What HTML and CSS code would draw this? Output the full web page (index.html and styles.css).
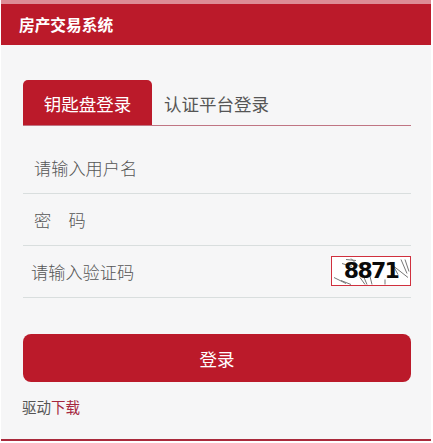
FILE: index.html
```html
<!DOCTYPE html>
<html lang="zh-CN">
<head>
<meta charset="utf-8">
<title>房产交易系统</title>
<link rel="stylesheet" href="styles.css">
</head>
<body>
<div class="panel">
  <header class="head">房产交易系统</header>
  <main class="content">
    <nav class="tabs">
      <a class="tab active">钥匙盘登录</a>
      <a class="tab">认证平台登录</a>
    </nav>
    <form class="form">
      <div class="row"><input class="field user" placeholder="请输入用户名"></div>
      <div class="row"><input class="field user" placeholder="密&#12288;码"></div>
      <div class="row">
        <input class="field code" placeholder="请输入验证码">
        <div class="captcha">
          <svg class="noise" viewBox="0 0 78 27" aria-hidden="true">
            <path d="M2 20l12 6M9 23l10 4M10 6l10 3M14 2l10 1M19 1l8 8M28 20l5 7M32 20l3 7M38 19l2 8M53 22v5M62 9l14 11M60 6l6 11M69 2l6 14M73 2l4 12"/>
          </svg>
          <span class="digits">8871</span>
        </div>
      </div>
      <button class="submit" type="button">登录</button>
    </form>
    <p class="driver">驱动<a class="link">下载</a></p>
  </main>
</div>
</body>
</html>
```
FILE: styles.css
```css
* { box-sizing: border-box; }
html, body { margin: 0; height: 100%; background: #fff; }
body { font-family: "Noto Sans CJK SC", "Liberation Sans", sans-serif; color: #555; }
.panel {
  margin: 0 2px 0 1px;
  height: 441px;
  background: #f6f6f7;
  border-top: 4px solid #dd8c95;
  border-bottom: 2px solid #a92a3c;
  display: flex;
  flex-direction: column;
}
.head {
  height: 41px;
  flex: none;
  padding-left: 18px;
  background: #bb1a2a;
  color: #fff;
  font-size: 15.7px;
  font-weight: 700;
  line-height: 41px;
}
.content { flex: 1; padding: 35px 20px 0 22px; }
.tabs {
  display: flex;
  height: 46px;
  border-bottom: 1px solid #c07583;
}
.tab {
  display: block;
  font-size: 17.5px;
  line-height: 47px;
  padding-left: 12px;
  color: #555;
}
.tab.active {
  width: 129px;
  height: 45px;
  padding: 0;
  text-align: center;
  background: #bb1a2a;
  color: #fff;
  border-radius: 5px 5px 0 0;
}
.form { display: flex; flex-direction: column; }
.row {
  height: 52px;
  display: flex;
  align-items: center;
  justify-content: space-between;
  border-bottom: 1px solid #d9dede;
  padding-bottom: 1px;
}
.row:first-child { height: 68px; padding-top: 16px; }
.field {
  border: 0;
  background: transparent;
  font: inherit;
  font-size: 17.2px;
  font-weight: 300;
  color: #555;
  outline: 0;
  width: 250px;
  padding: 0;
}
.field::placeholder { color: #555; opacity: 1; }
.user { margin-left: 11px; }
.code { margin-left: 8px; }
.captcha {
  position: relative;
  width: 80px;
  height: 30px;
  margin-bottom: 1px;
  background: #fff;
  border: 1px solid #d0303e;
  text-align: center;
  overflow: hidden;
}
.noise { position: absolute; inset: 0; width: 100%; height: 100%; }
.noise path { stroke: #777; stroke-width: 1; fill: none; }
.digits {
  position: relative;
  font-family: "DejaVu Sans", sans-serif;
  font-size: 22px;
  font-weight: 700;
  line-height: 27px;
  letter-spacing: -1.7px;
  color: #0a0a0a;
}
.submit {
  margin-top: 36px;
  height: 48px;
  border: 0;
  border-radius: 8px;
  background: #bb1a2a;
  color: #fff;
  font: inherit;
  font-size: 17.5px;
  padding: 0;
}
.driver {
  margin: 15px 0 0 -1px;
  font-size: 14.5px;
  line-height: 20px;
  color: #555;
}
.link { color: #a5283f; }
```
